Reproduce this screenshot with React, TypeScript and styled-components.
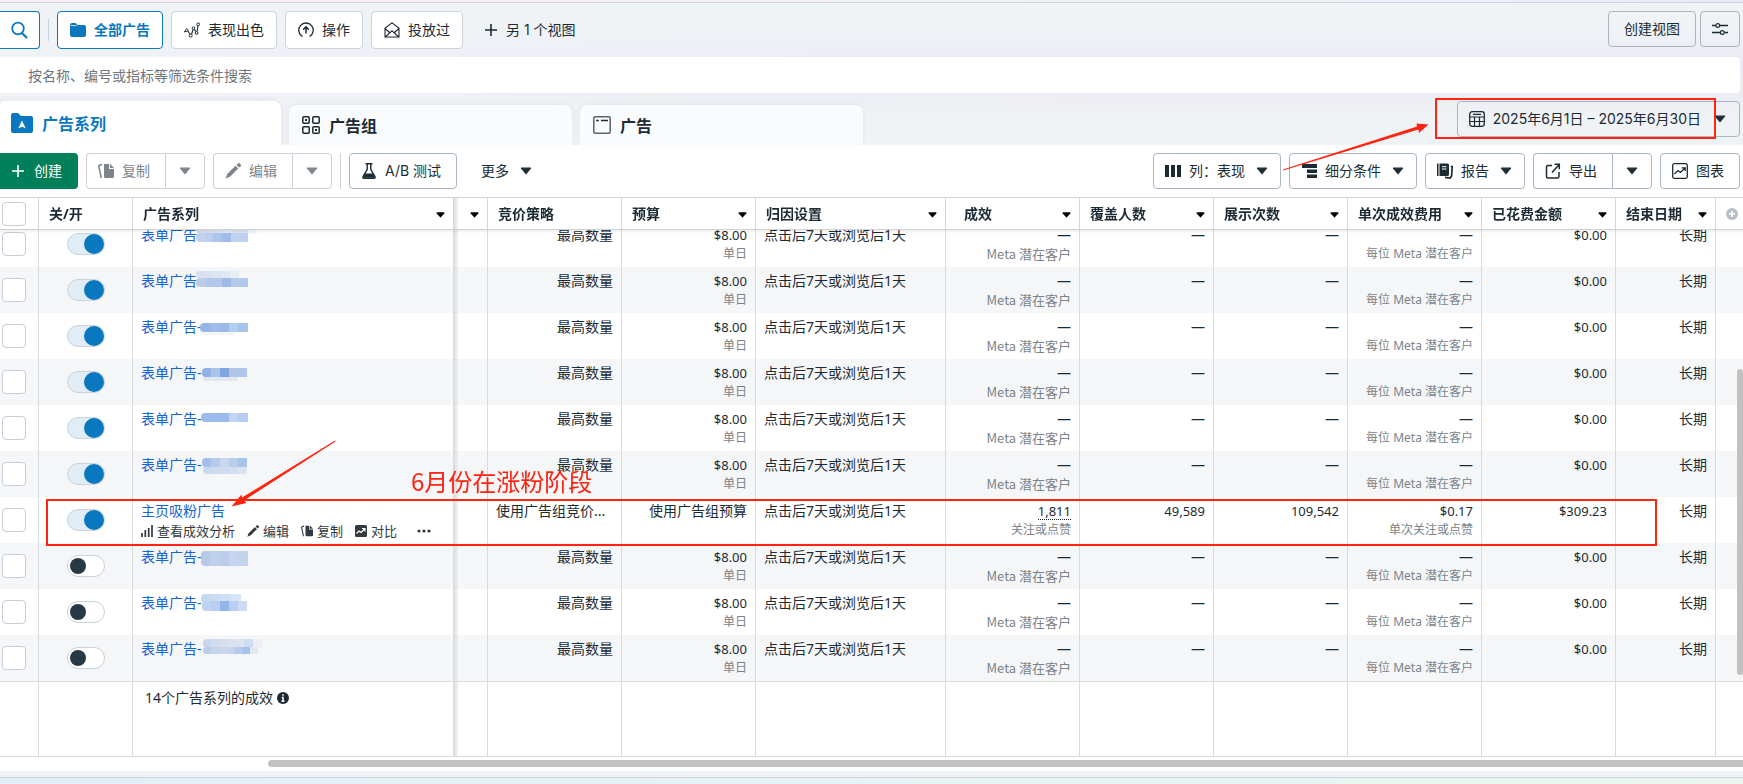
import React, { useLayoutEffect, useRef } from 'react';
import styled, { createGlobalStyle, css } from 'styled-components';

const uiFont = `Inter, "Noto Sans CJK SC", sans-serif`;
const dataFont = `"Noto Sans", "Noto Sans CJK SC", sans-serif`;
const ink = '#1c2b33';
const blue = '#0a78be';
const red = '#ff2412';

const GlobalStyle = createGlobalStyle`
  *, *::before, *::after { box-sizing: border-box; }
  html, body { margin: 0; padding: 0; }
  body { font-family: ${uiFont}; font-size: 14px; color: ${ink}; background: #eff3f6; overflow: hidden; }
  button, input { font: inherit; color: inherit; margin: 0; }
  button { cursor: pointer; }
`;

/* ---------- page frame ---------- */

const Page = styled.div`
  position: relative;
  display: flex;
  flex-direction: column;
  height: 100vh;
  overflow: hidden;
`;
const EdgeStrip = styled.div<{ $bottom?: boolean }>`
  flex: none;
  height: ${(p) => (p.$bottom ? 7 : 3)}px;
  ${(p) =>
    p.$bottom
      ? css`border-top: 1px solid #ccd6dc; background: linear-gradient(90deg, #e3edf8, #e6f3f4 50%, #eaf6ee);`
      : css`border-bottom: 1px solid #cfd5da; background: linear-gradient(90deg, #faeef0, #f3f0f4 50%, #e6edf8);`}
`;
const Header = styled.header`
  flex: none;
  display: flex;
  flex-direction: column;
  gap: 8px;
  padding-top: 8px;
  background:
    linear-gradient(90deg, rgba(239, 243, 246, 0.9), rgba(239, 243, 246, 0) 70%),
    linear-gradient(180deg, #eff3f6 0, #eff3f6 24px, #ebecf4 54px, #ededf3 92px, #eff3f6 118px);
`;
const Row = styled.div<{ $top?: boolean }>`
  display: flex;
  align-items: ${(p) => (p.$top ? 'flex-start' : 'center')};
  gap: 8px;
`;
const ViewRow = styled(Row)`
  height: 38px;
  padding-right: 3px;
`;
const Spacer = styled.div`
  flex: 1;
`;
const Divider = styled.span<{ $short?: boolean }>`
  width: 1px;
  height: ${(p) => (p.$short ? 22 : 36)}px;
  background: #cbd2d9;
  ${(p) => p.$short && 'margin-top: 8px;'}
`;

/* ---------- buttons ---------- */

const baseButton = css`
  display: inline-flex;
  flex: none;
  align-items: center;
  gap: 8px;
  height: 36px;
  line-height: 20px;
  white-space: nowrap;
  border: 1px solid #a9b6c1;
  border-radius: 4px;
  background: transparent;
  svg { flex: none; }
`;
const ViewButton = styled.button<{ $active?: boolean }>`
  ${baseButton}
  height: 38px;
  padding: 0 12px;
  background: #fff;
  border-color: ${(p) => (p.$active ? blue : '#cbd2d9')};
  color: ${(p) => (p.$active ? blue : ink)};
  font-weight: ${(p) => (p.$active ? 700 : 400)};
`;
const SearchButton = styled.button`
  ${baseButton}
  width: 40px;
  height: 38px;
  padding: 0 0 0 10px;
  border-color: ${blue};
  border-left: none;
  border-radius: 0 4px 4px 0;
  background: #fff;
  color: ${blue};
`;
const MoreViews = styled.button`
  ${baseButton}
  gap: 7px;
  height: 38px;
  padding: 0 11px;
  border-color: transparent;
`;
const SquareButton = styled.button`
  ${baseButton}
  width: 40px;
  justify-content: center;
  padding: 0;
`;
const TopActions = styled.div`
  display: flex;
  gap: 4px;
`;
const ToolButton = styled.button<{ $muted?: boolean; $plain?: boolean; $menu?: boolean }>`
  ${baseButton}
  padding: 0 ${(p) => (p.$menu ? 12 : 15)}px 0 11px;
  border-color: ${(p) => (p.$plain ? 'transparent' : p.$muted ? '#cbd2d9' : '#a9b6c1')};
  color: ${(p) => (p.$muted ? '#7d858b' : ink)};
  > svg:last-child { margin-left: ${(p) => (p.$menu ? 3 : 0)}px; }
`;
const CreateButton = styled.button`
  ${baseButton}
  padding: 0 16px 0 10px;
  border: none;
  border-radius: 0 4px 4px 0;
  background: #00805a;
  color: #fff;
`;
const SplitButton = styled.div`
  display: flex;
  ${ToolButton} {
    border-radius: 4px 0 0 4px;
    border-right: none;
  }
  ${SquareButton} {
    border-radius: 0 4px 4px 0;
  }
`;
const MutedCaret = styled(SquareButton)`
  border-color: #cbd2d9;
  color: #7d858b;
`;
const PlainButton = styled(ToolButton)`
  padding-left: 15px;
`;

/* ---------- search and tabs ---------- */

const FilterInput = styled.input`
  height: 36px;
  margin-right: 3px;
  padding: 0 28px;
  border: none;
  border-radius: 0 4px 4px 0;
  background: #fff;
  &::placeholder { color: #6e767c; opacity: 1; }
`;
const TabRow = styled.nav`
  display: flex;
  align-items: flex-end;
  gap: 8px;
  height: 44px;
  padding-right: 3px;
`;
const Tab = styled.button<{ $active?: boolean }>`
  display: flex;
  align-items: center;
  gap: 9px;
  flex: 0 1 ${(p) => (p.$active ? 281 : 283)}px;
  height: ${(p) => (p.$active ? 44 : 40)}px;
  padding: 0 ${(p) => (p.$active ? 11 : 13)}px;
  border: none;
  border-radius: ${(p) => (p.$active ? '4px 8px 0 0' : '8px 8px 0 0')};
  background: ${(p) => (p.$active ? '#fff' : '#fafbfd')};
  box-shadow: 0 0 6px rgba(30, 50, 70, 0.07);
  color: ${(p) => (p.$active ? blue : ink)};
  font-size: 16px;
  font-weight: 700;
`;
const DateButton = styled.button`
  ${baseButton}
  align-self: flex-start;
  padding: 0 13px 0 11px;
  > svg:last-child { margin-left: 5px; }
`;

/* ---------- table ---------- */

const Panel = styled.main`
  flex: 1;
  min-height: 0;
  display: flex;
  flex-direction: column;
  background: #fff;
  margin-bottom: 6px;
`;
const Toolbar = styled(Row)`
  padding: 8px 3px 8px 0;
`;
const TableArea = styled.div`
  position: relative;
  flex: 1;
  min-height: 0;
  border-top: 1px solid #d3d6d9;
`;
const Scroller = styled.div`
  height: 100%;
  overflow: auto;
  scrollbar-width: none;
`;
const Table = styled.table`
  width: 100%;
  min-width: 1743px;
  table-layout: fixed;
  border-collapse: separate;
  border-spacing: 0;
  font-family: ${dataFont};
  line-height: 20px;
`;
const frozenEdge = css`
  background-image: linear-gradient(90deg, #dcdee0, rgba(225, 227, 229, 0.4));
  background-size: 4px 100%;
  background-repeat: no-repeat;
`;
const Th = styled.th<{ $pad?: number; $edge?: boolean }>`
  position: sticky;
  top: 0;
  z-index: 2;
  height: 32px;
  padding: 0 8px 0 ${(p) => p.$pad ?? 10}px;
  border-right: 1px solid #d9dcdf;
  border-bottom: 1px solid #cfd1d3;
  background-color: #fff;
  box-shadow: 0 2px 2px rgba(0, 0, 0, 0.06);
  font-weight: 700;
  text-align: left;
  white-space: nowrap;
  ${(p) => p.$edge && frozenEdge}
  &:last-child { border-right: none; padding-right: 0; }
`;
const ThInner = styled.div`
  display: flex;
  align-items: center;
  justify-content: space-between;
  color: ${ink};
  > svg { flex: none; }
`;
const CaretButton = styled.button`
  display: flex;
  margin-left: auto;
  padding: 2px 0 0;
  border: none;
  background: none;
  color: #000;
`;
const Tr = styled.tr<{ $alt: boolean }>`
  background: ${(p) => (p.$alt ? '#f4f6f8' : '#fff')};
`;
const Td = styled.td<{ $left?: boolean; $edge?: boolean }>`
  height: 46px;
  padding: 4px 8px 0;
  border-right: 1px solid #d9dcdf;
  vertical-align: top;
  text-align: ${(p) => (p.$left ? 'left' : 'right')};
  white-space: nowrap;
  ${(p) => p.$edge && frozenEdge}
  &:last-child { border-right: none; }
`;
const CheckTd = styled(Td)`
  padding: 11px 0 0 2px;
  text-align: left;
`;
const SwitchTd = styled(Td)`
  padding: 12px 0 0 28px;
  text-align: left;
`;
const Checkbox = styled.input`
  appearance: none;
  display: block;
  width: 24px;
  height: 24px;
  border: 1px solid #c6cdd6;
  border-radius: 4px;
  background: #fff;
`;
const Switch = styled.input`
  appearance: none;
  display: flex;
  align-items: center;
  justify-content: flex-start;
  width: 38px;
  height: 22px;
  padding: 0 2px;
  border: 1px solid #cbd2d9;
  border-radius: 11px;
  background: #fff;
  &::before {
    content: '';
    width: 16px;
    height: 16px;
    border-radius: 50%;
    background: #283943;
  }
  &:checked {
    justify-content: flex-end;
    padding: 0;
    background: #e0edf7;
  }
  &:checked::before {
    width: 20px;
    height: 20px;
    background: ${blue};
  }
`;
const Value = styled.div<{ $number?: boolean }>`
  overflow: hidden;
  text-overflow: ellipsis;
  font-size: ${(p) => (p.$number ? 13 : 14)}px;
  line-height: 20px;
`;
const Dotted = styled.span`
  border-bottom: 1px dotted ${ink};
  display: inline-block;
  line-height: 16px;
`;
const Note = styled.div<{ $wide?: boolean }>`
  color: #7b8388;
  font-size: ${(p) => (p.$wide ? 13 : 12)}px;
  ${(p) => p.$wide && 'font-family: "Noto Sans CJK SC", sans-serif;'}
  line-height: 18px;
`;
const NameLine = styled.div`
  position: relative;
  height: 20px;
`;
const NameLink = styled.a`
  color: #1763cf;
  text-decoration: none;
`;
const Mosaic = styled.svg`
  position: absolute;
  left: 54px;
  top: 0;
`;
const RowActions = styled.div`
  display: flex;
  align-items: center;
  gap: 12px;
  padding-top: 1px;
`;
const RowAction = styled.button`
  display: flex;
  align-items: center;
  gap: 4px;
  padding: 0;
  border: none;
  background: none;
  color: #333a3f;
  font-size: 13px;
  line-height: 18px;
  &:last-child { margin-left: 8px; }
`;
const FootTd = styled.td<{ $edge?: boolean }>`
  position: sticky;
  bottom: 0;
  z-index: 2;
  height: 76px;
  padding: 6px 0 0 12px;
  border: solid #d9dcdf;
  border-width: 1px 1px 1px 0;
  background-color: #fff;
  vertical-align: top;
  white-space: nowrap;
  ${(p) => p.$edge && frozenEdge}
  &:last-child { border-right: none; }
`;
const Summary = styled.div`
  display: flex;
  align-items: center;
  gap: 4px;
`;
const VerticalThumb = styled.div`
  position: absolute;
  z-index: 3;
  right: 0;
  top: 171px;
  width: 6px;
  height: 306px;
  border-radius: 3px;
  background: #c1c1c1;
`;
const HorizontalTrack = styled.div`
  flex: none;
  height: 14px;
  padding: 3px 0 0 268px;
`;
const HorizontalThumb = styled.div`
  height: 7px;
  border-radius: 4px 0 0 4px;
  background: #c1c1c1;
`;

/* ---------- annotations drawn over the page ---------- */

const MarkBox = styled.div<{ $x: number; $y: number; $w: number; $h: number }>`
  position: absolute;
  z-index: 5;
  left: ${(p) => p.$x}px;
  top: ${(p) => p.$y}px;
  width: ${(p) => p.$w}px;
  height: ${(p) => p.$h}px;
  border: 2px solid ${red};
  pointer-events: none;
`;
const MarkLayer = styled.svg`
  position: absolute;
  z-index: 5;
  left: 0;
  top: 0;
  pointer-events: none;
`;
const MarkText = styled.div`
  position: absolute;
  z-index: 5;
  left: 411px;
  top: 468px;
  color: ${red};
  font-family: "Noto Sans CJK SC", sans-serif;
  font-size: 24px;
  line-height: 26px;
  pointer-events: none;
`;

/* ---------- icons ---------- */

const Icon = ({ children, w = 16, h = 16, box }: { children: React.ReactNode; w?: number; h?: number; box?: string }) => (
  <svg width={w} height={h} viewBox={box ?? `0 0 ${w} ${h}`} fill="none" stroke="currentColor" strokeWidth="1.5" aria-hidden="true">
    {children}
  </svg>
);
const Caret = () => (
  <Icon w={12} h={8}><path d="M1.400 1.200h9.200L6 6.600z" fill="currentColor" strokeWidth="1.200" strokeLinejoin="round" /></Icon>
);
const SmallCaret = () => (
  <Icon w={9} h={6}><path d="M1.2 1h6.6L4.5 4.6z" fill="currentColor" strokeLinejoin="round" /></Icon>
);
const SearchIcon = () => (
  <Icon w={18} h={18}><circle cx="8" cy="7.5" r="5.8" strokeWidth="1.8" /><path d="M12 12l5 5" strokeWidth="2.2" /></Icon>
);
const FolderIcon = () => (
  <Icon><path d="M0 3a2 2 0 012-2h3.500l2 2H14a2 2 0 012 2v8a2 2 0 01-2 2H2a2 2 0 01-2-2z" fill="currentColor" stroke="none" /><path d="M.5 3.600h6" stroke="#fff" strokeWidth=".8" /></Icon>
);
const TrendIcon = () => (
  <Icon><path d="M0 10l1.800-1M4 9.300l2 3M7.600 12l1.500-4.500M10.300 7.300l1.400 2.300M13 9.500L14 4" strokeWidth="1.100" /><circle cx="2.800" cy="8.300" r="1.300" strokeWidth="1" /><circle cx="6.700" cy="13.600" r="1.500" strokeWidth="1" /><circle cx="9.500" cy="6.200" r="1.300" strokeWidth="1" /><circle cx="12.600" cy="11" r="1.400" strokeWidth="1" /><circle cx="14.200" cy="2.300" r="1.400" strokeWidth="1" /></Icon>
);
const BoostIcon = () => (
  <Icon><path d="M4.500 14.500a7.200 7.200 0 117 0" strokeWidth="1.300" /><path d="M8 11.500V5M5.200 7.600L8 4.800l2.800 2.800" strokeWidth="1.500" /></Icon>
);
const MailIcon = () => (
  <Icon><path d="M1 6.200L8 .9l7 5.300V15H1zM1 6.500l4.500 4M15 6.500l-4.500 4M1.200 15L8 8.800l6.800 6.200" strokeWidth="1.100" strokeLinejoin="round" /></Icon>
);
const PlusIcon = () => (
  <Icon><path d="M8 2v12M2 8h12" strokeWidth="1.600" /></Icon>
);
const SlidersIcon = () => (
  <Icon><path d="M0 4.500h3.500M8 4.500h8M0 11.500h8M12.500 11.500H16" strokeWidth="1.300" /><circle cx="5.800" cy="4.500" r="1.900" strokeWidth="1.200" /><circle cx="10.300" cy="11.500" r="1.900" strokeWidth="1.200" /></Icon>
);
const CampaignIcon = () => (
  <Icon w={22} h={20}><path d="M0 2a2 2 0 012-2h5l3 3h10a2 2 0 012 2v13a2 2 0 01-2 2H2a2 2 0 01-2-2z" fill="currentColor" stroke="none" /><path d="M11 7.500l3.800 8L11 13.800 7.200 15.500z" fill="#fff" stroke="none" /></Icon>
);
const AdSetIcon = () => (
  <Icon w={18} h={18}><rect x=".8" y=".8" width="6.400" height="6.400" rx="1" /><rect x="10.800" y=".8" width="6.400" height="6.400" rx="1" /><rect x=".8" y="10.800" width="6.400" height="6.400" rx="1" /><rect x="10.800" y="10.800" width="6.400" height="6.400" rx="1" /><path d="M3 3h2v2H3zM13 13h2v2h-2z" fill="currentColor" stroke="none" /></Icon>
);
const AdIcon = () => (
  <Icon w={18} h={18}><rect x=".8" y=".8" width="16.400" height="16.400" rx="1.500" stroke="#57636a" /><path d="M3.200 4.500h2.600M8 4.500h7" /></Icon>
);
const CopyIcon = ({ s = 16 }: { s?: number }) => (
  <Icon w={s} h={s} box="0 0 16 16"><path d="M6 1h5v5h5v7.500a1.500 1.500 0 01-1.500 1.500H7.500A1.500 1.500 0 016 13.500z" fill="currentColor" stroke="none" /><path d="M12 .8V5h4z" fill="currentColor" stroke="none" /><path d="M4 1.500L1.500 2.300a1 1 0 00-.6 1.200L3.300 15" /></Icon>
);
const PencilIcon = ({ s = 16 }: { s?: number }) => (
  <Icon w={s} h={s} box="0 0 16 16"><path d="M10.500 2.800l2.700 2.700L5 13.800.5 15.500 2.200 11z" fill="currentColor" stroke="none" /><path d="M11.500 1.900l1.400-1.400a1.300 1.300 0 011.800 0l.9.900a1.300 1.300 0 010 1.800l-1.500 1.400z" fill="currentColor" stroke="none" /></Icon>
);
const FlaskIcon = () => (
  <Icon><path d="M4.500.8h7M6.200 1v5.500L2 13.600c-.4.800 0 1.600.8 1.600h10.400c.8 0 1.200-.8.8-1.600L9.800 6.500V1" strokeWidth="1.400" /><path d="M4.200 10.500h7.600l2.200 4.300H2z" fill="currentColor" stroke="none" /></Icon>
);
const ColumnsIcon = () => (
  <Icon><path d="M0 2h4v12H0zM6 2h4v12H6zM12 2h4v12h-4z" fill="currentColor" stroke="none" /></Icon>
);
const BreakdownIcon = () => (
  <Icon><path d="M1 1h15v4H1zM6 6.500h10v3.500H6zM6 11.500h10V15H6z" fill="currentColor" stroke="none" /></Icon>
);
const ReportIcon = () => (
  <Icon><path d="M0 .500h1.500V13H0zM2.500.500h8A1.500 1.500 0 0112 2v9.500a1.500 1.500 0 01-1.500 1.500h-8z" fill="currentColor" stroke="none" /><path d="M5 3.700h4.500M5 6h4.500" stroke="#fff" strokeWidth="1" /><path d="M13.800 3.200l1.400.400-.6 9.400-1.600 2-5-.600" strokeWidth="1.700" /></Icon>
);
const ExportIcon = () => (
  <Icon><path d="M7 2.500H3A1.500 1.500 0 001.500 4v9.500A1.500 1.500 0 003 15h9.500a1.500 1.500 0 001.500-1.500V9M7 9.500l7.200-8M9.500 1.200h4.800v5" strokeWidth="1.500" /></Icon>
);
const ChartIcon = () => (
  <Icon><rect x=".7" y=".7" width="14.600" height="14.600" rx="1.500" strokeWidth="1.300" /><path d="M2.500 11l3.500-3.500 2.500 2 4.500-4.500M9.800 4.800h3.400v3.200" strokeWidth="1.300" /></Icon>
);
const CalendarIcon = () => (
  <Icon><rect x=".7" y=".7" width="14.600" height="14.600" rx="2.500" strokeWidth="1.300" /><path d="M4 3.300h8M.8 6h14.400M.8 10.500h14.400M5.500 6v9M10.500 6v9" strokeWidth="1.200" /></Icon>
);
const BarsIcon = () => (
  <Icon w={12} h={12}><path d="M1 12V8M4.300 12V5M7.700 12V3M11 12V0" strokeWidth="1.700" /></Icon>
);
const CompareIcon = () => (
  <Icon w={12} h={12}><rect width="12" height="12" rx="1.500" fill="currentColor" stroke="none" /><path d="M1.500 8.500L4 6l2 1.500L9.500 4M7 3.500h3v3" stroke="#fff" strokeWidth="1.200" /></Icon>
);
const DotsIcon = () => (
  <Icon w={14} h={4}><g fill="currentColor" stroke="none"><circle cx="2" cy="2" r="1.600" /><circle cx="7" cy="2" r="1.600" /><circle cx="12" cy="2" r="1.600" /></g></Icon>
);
const InfoIcon = () => (
  <Icon w={12} h={12}><circle cx="6" cy="6" r="6" fill="currentColor" stroke="none" /><path d="M6 2.200v1.600M4.800 5.500H6v4M4.500 9.200h3" stroke="#fff" /></Icon>
);
const AddColumnIcon = () => (
  <Icon w={12} h={12}><circle cx="6" cy="6" r="6" fill="#b9bfc7" stroke="none" /><path d="M6 3v6M3 6h6" stroke="#fff" strokeWidth="1.600" /></Icon>
);

/* ---------- data ---------- */

type Band = { x: number; y: number; h: number; w?: number; colors: string[] };

const masks: Band[][] = [
  [
    { x: 1, y: 0, h: 9, colors: ['#d6deee', '#d9e1f0', '#dbe3f1', '#e3e8f2', '#d9e3f3', '#d9e3f3', '#f5f6f8'] },
    { x: 1, y: 8, h: 9, colors: ['#c3d2ee', '#bccdee', '#adc4ec', '#9fbcea', '#c0d2f0', '#bdd0f0'] },
  ],
  [
    { x: 1, y: 0, h: 7, colors: ['#d6e0ee', '#d9e3f0', '#dde5f0', '#e0e8f2', '#e6edf5'] },
    { x: 1, y: 7, h: 9, colors: ['#bccce8', '#b3c7e9', '#b3c7e9', '#9db9e6', '#b5c9e9', '#b2c8ea'] },
  ],
  [
    { x: 5, y: 12, h: 6, colors: ['#f2f6fc', '#f2f6fc', '#f2f6fc', '#f2f6fc'] },
    { x: 5, y: 6, h: 9, w: 48, colors: ['#94b6e8', '#9fbcea', '#9bb9e9', '#b4cdf0', '#a6c4ec'] },
  ],
  [
    { x: 8, y: 11, h: 7, colors: ['#dfe7f2', '#e2e8f2', '#e2e8f2', '#e2e8f2'] },
    { x: 7, y: 5, h: 9, w: 45, colors: ['#8fb1e3', '#adc4e8', '#7fa6e0', '#b0c5e8', '#b0c5e8'] },
  ],
  [{ x: 6, y: 4, h: 9, w: 46, colors: ['#9bbbea', '#9bbcea', '#9bbcea', '#c2d4f2', '#b6ccf0'] }],
  [
    { x: 8, y: 11, h: 8, w: 44, colors: ['#c9d8ee', '#cfdcee', '#cfdcee', '#d2deef', '#d9e3f1'] },
    { x: 7, y: 3, h: 9, w: 45, colors: ['#a3bfe8', '#b6cbe9', '#c9d8ee', '#b8cdea', '#a9c3ea'] },
  ],
  [],
  [{ x: 6, y: 4, h: 15, w: 46, colors: ['#b6c9e9', '#c0d0ec', '#bccdec', '#c6d5ed', '#c3d3ec'] }],
  [
    { x: 6, y: 1, h: 9, w: 40, colors: ['#c6d9f3', '#cbdcf4', '#cfe0f5', '#d8e5f6'] },
    { x: 7, y: 8, h: 10, w: 45, colors: ['#bed2f1', '#b7cef0', '#93b6e8', '#b8cff1', '#cbdcf4'] },
  ],
  [
    { x: 8, y: 0, h: 9, w: 58, colors: ['#c8d6ee', '#d3dcee', '#d6def0', '#dbe1f0', '#dfe3ef', '#d0dcf0', '#eceff5'] },
    { x: 8, y: 8, h: 7, w: 55, colors: ['#bccdeb', '#c6d3ec', '#cbd7ee', '#c6d4ed', '#b9cbea', '#a9c2ea', '#e3e9f3'] },
  ],
];

type Campaign = { name: string; on: boolean; featured?: boolean };
const campaigns: Campaign[] = masks.map((_, i) =>
  i === 6 ? { name: '主页吸粉广告', on: true, featured: true } : { name: '表单广告-', on: i < 6 },
);

const columns: { label: string; width?: number; pad?: number; noCaret?: boolean; edge?: boolean }[] = [
  { label: '广告系列', width: 321 },
  { label: '', width: 34, edge: true },
  { label: '竞价策略', width: 134, noCaret: true },
  { label: '预算', width: 134 },
  { label: '归因设置', width: 190 },
  { label: '成效', width: 134, pad: 18 },
  { label: '覆盖人数', width: 134 },
  { label: '展示次数', width: 134 },
  { label: '单次成效费用', width: 134 },
  { label: '已花费金额', width: 134 },
  { label: '结束日期', width: 100 },
];

const NameMask = ({ bands }: { bands: Band[] }) => (
  <Mosaic width="70" height="20" aria-hidden="true">
    {bands.map((b, i) => {
      const width = b.w ?? b.colors.length * 9 - 2;
      const step = width / b.colors.length;
      return (
        <g key={i}>
          {b.colors.map((c, j) => (
            <rect
              key={j}
              x={Math.round(b.x + j * step)}
              y={b.y}
              width={Math.ceil(step) + (j === 0 ? 2 : 0)}
              height={b.h}
              rx={j === 0 ? 4 : 0}
              fill={c}
            />
          ))}
        </g>
      );
    })}
  </Mosaic>
);

const CampaignRow = ({ c, index }: { c: Campaign; index: number }) => (
  <Tr $alt={index % 2 === 1}>
    <CheckTd><Checkbox type="checkbox" aria-label={`选择 ${c.name}`} /></CheckTd>
    <SwitchTd><Switch type="checkbox" role="switch" defaultChecked={c.on} aria-label={`关/开 ${c.name}`} /></SwitchTd>
    <Td $left>
      <NameLine>
        <NameLink href="#campaign">{c.name}</NameLink>
        {!c.featured && <NameMask bands={masks[index]} />}
      </NameLine>
      {c.featured && (
        <RowActions>
          <RowAction><BarsIcon />查看成效分析</RowAction>
          <RowAction><PencilIcon s={12} />编辑</RowAction>
          <RowAction><CopyIcon s={12} />复制</RowAction>
          <RowAction><CompareIcon />对比</RowAction>
          <RowAction aria-label="更多操作"><DotsIcon /></RowAction>
        </RowActions>
      )}
    </Td>
    <Td $edge />
    <Td $left={c.featured}><Value>{c.featured ? '使用广告组竞价...' : '最高数量'}</Value></Td>
    <Td>
      <Value $number={!c.featured}>{c.featured ? '使用广告组预算' : '$8.00'}</Value>
      {!c.featured && <Note>单日</Note>}
    </Td>
    <Td $left><Value>点击后7天或浏览后1天</Value></Td>
    <Td>
      <Value $number={c.featured}>{c.featured ? <Dotted>1,811</Dotted> : '—'}</Value>
      <Note $wide={!c.featured}>{c.featured ? '关注或点赞' : 'Meta 潜在客户'}</Note>
    </Td>
    <Td><Value $number={c.featured}>{c.featured ? '49,589' : '—'}</Value></Td>
    <Td><Value $number={c.featured}>{c.featured ? '109,542' : '—'}</Value></Td>
    <Td>
      <Value $number={c.featured}>{c.featured ? '$0.17' : '—'}</Value>
      <Note>{c.featured ? '单次关注或点赞' : '每位 Meta 潜在客户'}</Note>
    </Td>
    <Td><Value $number>{c.featured ? '$309.23' : '$0.00'}</Value></Td>
    <Td><Value>长期</Value></Td>
    <Td />
  </Tr>
);

const CampaignTable = () => {
  const scroller = useRef<HTMLDivElement>(null);
  useLayoutEffect(() => {
    if (scroller.current) scroller.current.scrollTop = scroller.current.scrollHeight;
  }, []);
  return (
    <TableArea>
      <Scroller ref={scroller}>
        <Table>
          <colgroup>
            <col style={{ width: 39 }} />
            <col style={{ width: 94 }} />
            {columns.map((c, i) => <col key={i} style={{ width: c.width }} />)}
            <col />
          </colgroup>
          <thead>
            <tr>
              <Th $pad={2}><Checkbox type="checkbox" aria-label="全选" /></Th>
              <Th>关/开</Th>
              {columns.map((c, i) => (
                <Th key={i} $pad={c.pad} $edge={c.edge}>
                  <ThInner>
                    {c.label}
                    {!c.noCaret && <CaretButton aria-label={`${c.label} 选项`}><SmallCaret /></CaretButton>}
                  </ThInner>
                </Th>
              ))}
              <Th>
                <ThInner><AddColumnIcon /></ThInner>
              </Th>
            </tr>
          </thead>
          <tbody>
            {campaigns.map((c, i) => <CampaignRow key={i} c={c} index={i} />)}
          </tbody>
          <tfoot>
            <tr>
              <FootTd />
              <FootTd />
              <FootTd><Summary>14个广告系列的成效<InfoIcon /></Summary></FootTd>
              <FootTd $edge />
              {columns.slice(2).map((_, i) => <FootTd key={i} />)}
              <FootTd />
            </tr>
          </tfoot>
        </Table>
      </Scroller>
      <VerticalThumb />
    </TableArea>
  );
};

export default function App() {
  return (
    <Page>
      <GlobalStyle />
      <EdgeStrip />
      <Header>
        <ViewRow $top>
          <SearchButton aria-label="搜索"><SearchIcon /></SearchButton>
          <Divider $short />
          <ViewButton $active><FolderIcon />全部广告</ViewButton>
          <ViewButton><TrendIcon />表现出色</ViewButton>
          <ViewButton><BoostIcon />操作</ViewButton>
          <ViewButton><MailIcon />投放过</ViewButton>
          <MoreViews><PlusIcon />另 1 个视图</MoreViews>
          <Spacer />
          <TopActions>
            <PlainButton>创建视图</PlainButton>
            <SquareButton aria-label="视图设置"><SlidersIcon /></SquareButton>
          </TopActions>
        </ViewRow>
        <FilterInput type="text" aria-label="搜索" placeholder="按名称、编号或指标等筛选条件搜索" />
        <TabRow>
          <Tab $active><CampaignIcon />广告系列</Tab>
          <Tab><AdSetIcon />广告组</Tab>
          <Tab><AdIcon />广告</Tab>
          <Spacer />
          <DateButton><CalendarIcon />2025年6月1日 – 2025年6月30日<Caret /></DateButton>
        </TabRow>
      </Header>
      <Panel>
        <Toolbar>
          <CreateButton><PlusIcon />创建</CreateButton>
          <SplitButton>
            <ToolButton $muted><CopyIcon />复制</ToolButton>
            <MutedCaret aria-label="复制选项"><Caret /></MutedCaret>
          </SplitButton>
          <SplitButton>
            <ToolButton $muted><PencilIcon />编辑</ToolButton>
            <MutedCaret aria-label="编辑选项"><Caret /></MutedCaret>
          </SplitButton>
          <Divider />
          <ToolButton><FlaskIcon />A/B 测试</ToolButton>
          <PlainButton $plain $menu>更多<Caret /></PlainButton>
          <Spacer />
          <ToolButton $menu><ColumnsIcon />列：表现<Caret /></ToolButton>
          <ToolButton $menu><BreakdownIcon />细分条件<Caret /></ToolButton>
          <ToolButton $menu><ReportIcon />报告<Caret /></ToolButton>
          <SplitButton>
            <ToolButton><ExportIcon />导出</ToolButton>
            <SquareButton aria-label="导出选项"><Caret /></SquareButton>
          </SplitButton>
          <ToolButton><ChartIcon />图表</ToolButton>
        </Toolbar>
        <CampaignTable />
        <HorizontalTrack><HorizontalThumb /></HorizontalTrack>
      </Panel>
      <EdgeStrip $bottom />

      <MarkBox $x={1435} $y={98} $w={281} $h={41} />
      <MarkBox $x={46} $y={499} $w={1611} $h={47} />
      <MarkText>6月份在涨粉阶段</MarkText>
      <MarkLayer width="1743" height="784" aria-hidden="true">
        <g fill={red}>
          <path d="M1283 169.500L1417 126.500L1416.500 123.500L1428.500 124.500L1419 133L1418.500 129.500L1283 170.500z" />
          <path d="M335 440.500L242 497.500L241.500 494.500L231.500 506.500L246.500 503L244 500.500L335.500 441.500z" />
        </g>
      </MarkLayer>
    </Page>
  );
}
